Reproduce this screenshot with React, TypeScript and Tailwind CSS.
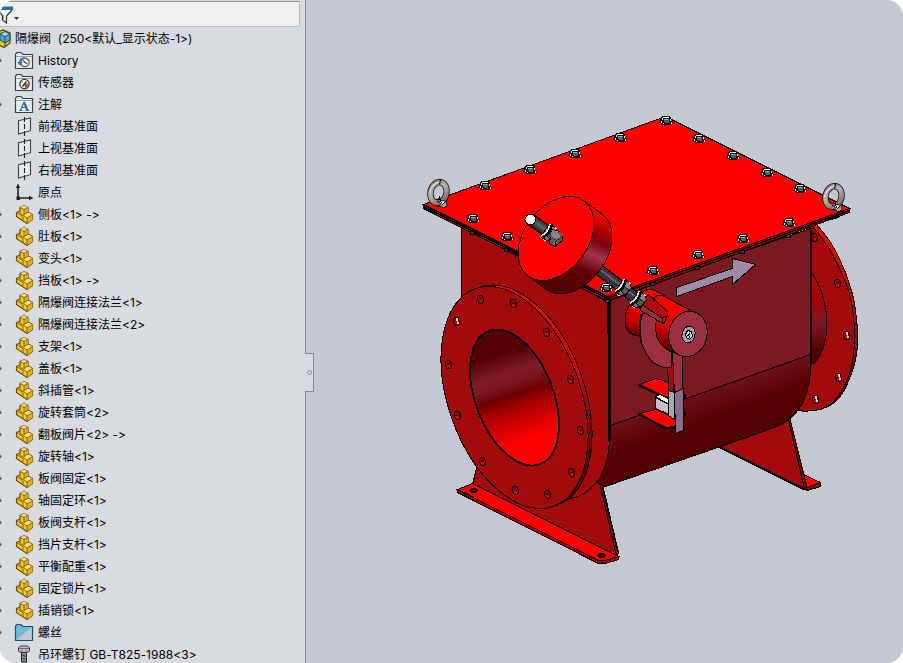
import { useState } from 'react';
import type { ReactNode } from 'react';

type IconKind =
  | 'history'
  | 'sensor'
  | 'note'
  | 'plane'
  | 'origin'
  | 'part'
  | 'folder'
  | 'screw';

type TreeItem = { label: string; icon: IconKind; expandable?: boolean };

const part = (label: string): TreeItem => ({ label, icon: 'part', expandable: true });

const items: TreeItem[] = [
  { label: 'History', icon: 'history', expandable: true },
  { label: '传感器', icon: 'sensor' },
  { label: '注解', icon: 'note', expandable: true },
  { label: '前视基准面', icon: 'plane' },
  { label: '上视基准面', icon: 'plane' },
  { label: '右视基准面', icon: 'plane' },
  { label: '原点', icon: 'origin' },
  part('侧板<1> ->'),
  part('肚板<1>'),
  part('变头<1>'),
  part('挡板<1> ->'),
  part('隔爆阀连接法兰<1>'),
  part('隔爆阀连接法兰<2>'),
  part('支架<1>'),
  part('盖板<1>'),
  part('斜插管<1>'),
  part('旋转套筒<2>'),
  part('翻板阀片<2> ->'),
  part('旋转轴<1>'),
  part('板阀固定<1>'),
  part('轴固定环<1>'),
  part('板阀支杆<1>'),
  part('挡片支杆<1>'),
  part('平衡配重<1>'),
  part('固定锁片<1>'),
  part('插销锁<1>'),
  { label: '螺丝', icon: 'folder', expandable: true },
  { label: '吊环螺钉 GB-T825-1988<3>', icon: 'screw', expandable: true },
];

const FolderFrame = ({ children }: { children: ReactNode }) => (
  <>
    <path d="M1.5 17.5V3L3 1.5H7L9 3.5H18.5V17.5Z" fill="#e9edf0" stroke="#3c3f42" strokeWidth="1.2" />
    <path d="M2 5.5H18" stroke="#9a9ea2" strokeWidth="1" />
    {children}
  </>
);

const icons: Record<IconKind, ReactNode> = {
  history: (
    <FolderFrame>
      <circle cx="11" cy="11.5" r="4.2" fill="#fff" stroke="#55595c" strokeWidth="1.2" />
      <path d="M9 9.5L11.5 12L13.5 12.5" fill="none" stroke="#333" strokeWidth="1.1" />
      <path d="M11 7.2C8 7 6 8.500 5.800 11" fill="none" stroke="#2f7ea3" strokeWidth="1.8" />
      <path d="M3 11H9L6 15Z" fill="#2f7ea3" />
    </FolderFrame>
  ),
  sensor: (
    <FolderFrame>
      <circle cx="10.500" cy="11" r="4.6" fill="#fff" stroke="#333" strokeWidth="1.3" />
      <path d="M10.500 11L14 10.500A4 4 0 0 1 11 15Z" fill="#e03a1c" />
      <path d="M8.500 13.500L12.500 8.500" stroke="#222" strokeWidth="1.4" />
      <path d="M7.500 9.500L8.500 8.500" stroke="#2f7ea3" strokeWidth="1.2" />
    </FolderFrame>
  ),
  note: (
    <FolderFrame>
      <path
        d="M5 15.500H8.500M11.500 15.500H15.500M6.500 15.500L10 7M8 12.500H12.500"
        fill="none"
        stroke="#2b7194"
        strokeWidth="1.2"
      />
      <path d="M10 7L13.500 15.500" stroke="#2b7194" strokeWidth="2.200" />
    </FolderFrame>
  ),
  plane: (
    <>
      <path d="M4.500 3.800L16.500 1V13.700L4.500 17Z" fill="#e6e9ec" stroke="#3c3f42" strokeWidth="1.1" />
      <path d="M10.500 0V19" stroke="#222" strokeWidth="1.1" strokeDasharray="5 2" />
    </>
  ),
  origin: (
    <>
      <path d="M4 3V15H16" fill="none" stroke="#222" strokeWidth="1.6" />
      <path d="M1.800 5L4 0.500L6.200 5ZM15 12.700L19.500 15L15 17.300Z" fill="#222" />
      <rect x="2.500" y="13.500" width="3.500" height="3.500" fill="#222" />
    </>
  ),
  part: (
    <>
      <path
        d="M6 2.500L10 0.700L14 2.500V7L18.500 9.500V14.500L13 18.500L2.500 11.500V7.500L6 6Z"
        fill="#f9cb1f"
        stroke="#6b4c08"
        strokeWidth="1.2"
        strokeLinejoin="round"
      />
      <path d="M6 2.500L10 0.700L14 2.500L10 4.500ZM9.500 10.500L14 7.500L18.500 9.500L13 13Z" fill="#fbe07a" />
      <path d="M10 4.500V9.500L14 7V2.500ZM13 13V18.500L18.500 14.500V9.500Z" fill="#e5ae1a" />
      <path
        d="M6 2.500L10 4.500L14 2.500M10 4.500V9.500L14 7M6 6V8.500L10 10.500M2.500 7.500L9 11.500V15M9.500 10.500L13 13L18.500 9.500M13 13V18.500"
        fill="none"
        stroke="#7a580c"
        strokeWidth="0.900"
      />
    </>
  ),
  folder: (
    <>
      <path d="M1.500 17.500V3L3 1.500H7L9 3.500H18.500V17.500Z" fill="#6fb9dc" />
      <path d="M18.500 3.500V17.500H1.500Z" fill="#c3c9cd" />
      <path d="M1.500 17.500V3L3 1.500H7L9 3.500H18.500V17.500Z" fill="none" stroke="#17506b" strokeWidth="1.2" />
    </>
  ),
  screw: (
    <>
      <path d="M7.500 7H12.500V17L10 19L7.500 17Z" fill="#8d8f91" stroke="#2e2e2e" strokeWidth="1" />
      <path d="M7.500 10L12.500 11.500M7.500 13L12.500 14.500M7.500 16L12.500 17" stroke="#333" strokeWidth="0.900" />
      <path d="M4.500 2.500L7 1H13L15.500 2.500V6L13 7.500H7L4.500 6Z" fill="#c6c9cb" stroke="#2e2e2e" strokeWidth="1" />
      <path d="M5 3.500H15M8 3.500V7M12 3.500V7" stroke="#555" strokeWidth="0.800" />
    </>
  ),
};

const TreeRow = ({ item }: { item: TreeItem }) => {
  const [open, setOpen] = useState(false);
  return (
    <li className="flex h-[22px] items-center">
      {item.expandable ? (
        <button
          type="button"
          aria-label={item.label}
          aria-expanded={open}
          onClick={() => setOpen(!open)}
          className="flex w-[14px] shrink-0"
        >
          <svg className="h-2 w-2" viewBox="0 0 8 8">
            <path d="M0 1.500L2 3.500L0 5.500Z" fill="#5d6064" />
          </svg>
        </button>
      ) : (
        <span className="w-[14px] shrink-0" />
      )}
      <svg className="h-5 w-5 shrink-0" viewBox="0 0 20 20">
        {icons[item.icon]}
      </svg>
      <span className="ml-1 whitespace-pre">{item.label}</span>
    </li>
  );
};

// bolt heads on the cover plate
const bolts = [
  [665, 120], [698, 138], [732, 155], [766, 172], [799, 188], [788, 222], [742, 238], [697, 254],
  [652, 270], [605, 287], [472, 218], [506, 236], [484, 185], [529, 169], [574, 153], [619, 137],
];

// bolt ends sticking out under the plate
const boltEnds = [
  [472, 232], [506, 249], [607, 300], [652, 283], [697, 267], [742, 251], [788, 235],
];

const frontHoles = [
  [480, 299], [513, 303], [546, 332], [570, 379], [580, 430], [571, 472],
  [547, 494], [515, 490], [482, 461], [457, 415], [448, 364], [456, 321],
];

const rearHoles = [
  [814, 237], [837, 283], [846, 335], [838, 377], [815, 399],
];

const Bolt = ({ x, y }: { x: number; y: number }) => (
  <g transform={`translate(${x} ${y})`} stroke="none">
    <path d="M-4 -4L-2 -5H3L5 -3L6 0L7 2L4 4L0 5L-4 4L-6 2L-5 -1Z" fill="#0b0b0b" />
    <path d="M-3 -4H3V-3H-3ZM-4 -3H-3V-1H-4ZM4 -2H5V0H4ZM-5 0H-4V2H-5ZM5 1H6V3H5ZM-3 2H-2V3H-3Z" fill="#f4f4f4" />
    <path d="M-2 -2H2L3 -1V2H-1L-2 1Z" fill="#5c5c5c" />
    <path d="M-2 -2H2V-1H-2Z" fill="#a8a8a8" />
  </g>
);

const Hole = ({ x, y, tail }: { x: number; y: number; tail?: boolean }) => (
  <g transform={`translate(${x} ${y}) rotate(-15)`}>
    <ellipse cx="0" cy="0" rx="3" ry="4.500" fill="#8e0608" />
    <path d="M-2 0.500Q0 -2 2 1.500Q2 4 0 4Q-2 3 -2 0.500Z" fill="#f00000" strokeWidth="0.700" />
    {tail && <path d="M1 -3V3" stroke="#d0d2da" strokeWidth="1.500" />}
  </g>
);

const EyeBolt = ({ x, y }: { x: number; y: number }) => (
  <g transform={`translate(${x} ${y})`}>
    <path d="M-3 8L1 6L8 7V13L4 15L-3 13Z" fill="#a9a4a2" strokeWidth="0.700" />
    <g transform="rotate(14)" shapeRendering="auto">
      <ellipse cx="0" cy="0" rx="8" ry="10.500" fill="none" stroke="#161414" strokeWidth="6.500" />
      <ellipse cx="0" cy="0" rx="8" ry="10.500" fill="none" stroke="url(#steel)" strokeWidth="4.800" />
      <path d="M-8.500 3Q-9 -6 -2 -10.500" fill="none" stroke="#e9e4e2" strokeWidth="1.400" />
      <path d="M-1 -13.500V-8" />
    </g>
    <path d="M-2 9L3 8L6 9L3 12Z" fill="#e2dedc" strokeWidth="0.700" />
    <path d="M1 4L3 11" />
  </g>
);

const RodNut = ({ x, y }: { x: number; y: number }) => (
  <g transform={`translate(${x} ${y}) rotate(37)`}>
    <path d="M-4 -7L3 -8L7 -5V5L3 8L-4 7Z" fill="#5d555c" />
    <path d="M-1 -7L3 -8L7 -5V-2H-1Z" fill="#8d7f88" strokeWidth="0.700" />
    <path d="M-1 4H6L3 8L-1 7Z" fill="#7b7078" strokeWidth="0.700" />
    <path d="M-3 -8Q2 0 -3 8" fill="none" strokeWidth="4" />
    <path d="M-4 -8Q0 0 -4 8" fill="none" stroke="#f1ede4" strokeWidth="1.600" />
    <path d="M2 -8L5 -8M3 8L0 9" stroke="#f1ede4" strokeWidth="1.200" />
  </g>
);

const ValveModel = () => (
  <svg
    className="h-full w-full"
    viewBox="305.5 -0.5 597 663"
    role="img"
    aria-label="隔爆阀"
    shapeRendering="crispEdges"
    stroke="#000"
    strokeWidth="1"
  >
    <defs>
      {/* runs in page space, so undo the rotation of the ellipse that it fills */}
      <linearGradient
        id="bore"
        gradientUnits="userSpaceOnUse"
        x1="492"
        y1="333"
        x2="534"
        y2="456"
        gradientTransform="rotate(-68.9 514 397)"
      >
        <stop offset="0.160" stopColor="#520000" />
        <stop offset="0.330" stopColor="#801c27" />
        <stop offset="0.400" stopColor="#7a1820" />
        <stop offset="0.500" stopColor="#6e0004" />
        <stop offset="0.600" stopColor="#a80000" />
        <stop offset="0.860" stopColor="#ff0000" />
      </linearGradient>
      <linearGradient id="belly" gradientUnits="userSpaceOnUse" x1="700" y1="390" x2="726" y2="462">
        <stop offset="0" stopColor="#70131a" />
        <stop offset="0.400" stopColor="#560000" />
        <stop offset="1" stopColor="#500000" />
      </linearGradient>
      <linearGradient id="rearTube" x1="0" y1="0" x2="0" y2="1">
        <stop offset="0" stopColor="#d80000" />
        <stop offset="0.280" stopColor="#a80000" />
        <stop offset="0.550" stopColor="#7c1a24" />
        <stop offset="0.850" stopColor="#520000" />
      </linearGradient>
      <linearGradient id="rearRim" gradientUnits="userSpaceOnUse" x1="820" y1="230" x2="850" y2="400">
        <stop offset="0" stopColor="#f40000" />
        <stop offset="0.450" stopColor="#c40000" />
        <stop offset="0.700" stopColor="#74151c" />
        <stop offset="1" stopColor="#520000" />
      </linearGradient>
      <linearGradient
        id="frontRim"
        gradientUnits="userSpaceOnUse"
        x1="530"
        y1="290"
        x2="585"
        y2="480"
        gradientTransform="rotate(-70.2 518 395.5)"
      >
        <stop offset="0" stopColor="#ff0000" />
        <stop offset="0.450" stopColor="#e00000" />
        <stop offset="0.700" stopColor="#7c0a10" />
        <stop offset="1" stopColor="#5a0000" />
      </linearGradient>
      <linearGradient id="weight" gradientUnits="userSpaceOnUse" x1="598" y1="206" x2="560" y2="296">
        <stop offset="0.050" stopColor="#fa0000" />
        <stop offset="0.240" stopColor="#a00000" />
        <stop offset="0.340" stopColor="#7a0410" />
        <stop offset="0.480" stopColor="#a43447" />
        <stop offset="0.660" stopColor="#640008" />
        <stop offset="0.900" stopColor="#520000" />
      </linearGradient>
      <linearGradient id="hub" gradientUnits="userSpaceOnUse" x1="676" y1="302" x2="660" y2="346">
        <stop offset="0.250" stopColor="#ff0000" />
        <stop offset="0.700" stopColor="#c00000" />
        <stop offset="1" stopColor="#5a0000" />
      </linearGradient>
      <linearGradient id="rod" gradientUnits="userSpaceOnUse" x1="543" y1="221" x2="537" y2="230">
        <stop offset="0" stopColor="#2c2a30" />
        <stop offset="0.500" stopColor="#65606a" />
        <stop offset="1" stopColor="#242226" />
      </linearGradient>
      <linearGradient id="steel" x1="0" y1="0" x2="1" y2="1">
        <stop offset="0" stopColor="#7d7775" />
        <stop offset="0.400" stopColor="#b9b3b0" />
        <stop offset="1" stopColor="#6a6462" />
      </linearGradient>
    </defs>

    {/* rear flange */}
    <path
      d="M806 222L815 223Q827 236 833 247Q845 269 850 287Q855 301 857 330Q858 355 852 370Q844 394 834 402Q820 413 796 410Z"
      fill="url(#rearRim)"
    />
    <path
      d="M806 222L811 225Q826 242 832 254Q845 279 849 293Q854 312 854 335Q854 358 849 373Q842 393 832 402Q820 413 796 410Z"
      fill="#a30a0c"
    />
    <path d="M808 268Q820 283 824 302Q829 325 824 343Q820 360 808 366Z" fill="url(#rearTube)" />
    {rearHoles.map(([x, y]) => (
      <Hole key={y} x={x} y={y} tail={y > 300} />
    ))}

    {/* rear foot */}
    <path d="M803 474L820 482V486L807 490L803 488Z" fill="#ff0000" />
    <path d="M807 490V487L820 482V486Z" fill="#8a0608" />
    <path d="M718 446L774 425L787 415L806 489L803 488Z" fill="#a30a0c" />
    <path d="M720 447L804 489" strokeWidth="2" />
    <path d="M787 415L789 416L807 489H804Z" fill="#7a0608" />

    {/* front foot */}
    <path d="M477 464L472 484L616 556L618 552L603 488L599 480L560 490Z" fill="#a30a0c" />
    <path d="M599 482L601 482L605 500L618 553L616 556Z" fill="#7a0608" />
    <path d="M457 489L472 483L618 556V559L605 563H598L457 492Z" fill="#9a0608" />
    <path d="M457 489L472 483L618 556L604 560H598Z" fill="#ff0000" />
    <ellipse cx="473" cy="490" rx="3.500" ry="1.500" fill="#700" strokeWidth="1.500" />
    <ellipse cx="601" cy="555" rx="3.500" ry="1.500" fill="#700" strokeWidth="1.500" />

    {/* housing */}
    <path
      d="M610 424L810 354V365Q810 384 804 398Q796 418 774 427L720 446L602 487L596 480L609 440Z"
      fill="url(#belly)"
    />
    <path d="M610 297L810 228V354L610 425Z" fill="#7c1a21" />
    <path
      d="M461 222L607 297L609 440Q608 462 600 476Q588 496 566 499L540 500L461 400Z"
      fill="#a30a0c"
    />
    <path d="M609 300V440" strokeWidth="3" />
    <path d="M810 230V365" strokeWidth="2" />

    {/* front flange */}
    <ellipse cx="518" cy="395.500" rx="115.600" ry="66.100" transform="rotate(70.200 518 395.500)" fill="url(#frontRim)" />
    <ellipse cx="514" cy="397" rx="115.600" ry="66.100" transform="rotate(70.200 514 397)" fill="#a30a0c" />
    <ellipse
      cx="514"
      cy="397"
      rx="71.300"
      ry="38.900"
      transform="rotate(68.900 514 397)"
      fill="url(#bore)"
      strokeWidth="1.800"
    />
    {frontHoles.map(([x, y]) => (
      <Hole key={`${x}-${y}`} x={x} y={y} tail={x === 456} />
    ))}

    {/* flow direction arrow */}
    <path d="M676 287L732 268V258L755 264L732 284V276L676 296Z" fill="#a08aa8" />

    {/* cover plate */}
    <path d="M423 204L607 296L849 208V212L607 301L423 208Z" fill="#7a0608" />
    <path d="M423 206L607 298L849 210" fill="none" />
    <path d="M423 204L665 116L849 208L607 296Z" fill="#ff0000" />
    <path d="M826 218L838 214V217L830 219Z" fill="#111" />
    {boltEnds.map(([x, y]) => (
      <rect key={x} x={x - 2} y={y - 1} width="4" height="3" fill="#3c3c3c" />
    ))}
    {bolts.map(([x, y]) => (
      <Bolt key={`${x}-${y}`} x={x} y={y} />
    ))}
    <EyeBolt x={438} y={192} />
    <EyeBolt x={833} y={196} />

    {/* shelves and latch block */}
    <path d="M639 384L655 378L672 383V398L664 396Z" fill="#ff0000" />
    <path d="M639 385L664 397L670 398" fill="none" strokeWidth="2" />
    <path d="M655 396L660 394L670 399V405Z" fill="#fff" />
    <path d="M655 397L669 404V414L655 408Z" fill="#c2c2c2" />
    <path d="M639 413L655 409L676 418V426L664 427Z" fill="#ff0000" />
    <path d="M639 414L664 427L674 427" fill="none" strokeWidth="2" />

    {/* lever */}
    <path d="M667 358L673 350V393L668 390Z" fill="#a30a0c" />
    <path d="M672 352L682 354V388L674 393Z" fill="#9c2f40" />
    <path d="M668 390L674 392V419L668 415Z" fill="#a9a9a9" />
    <path d="M674 392L683 388V430L675 433Z" fill="#857087" />
    <path d="M684 393V397M684 411V415" strokeWidth="3" />

    {/* hub with the fork */}
    <path d="M647 289Q655 288 666 297L650 320L641 336Q628 335 625 326V314Q630 296 647 289Z" fill="url(#hub)" />
    <path
      d="M642 313Q638 326 641 342Q645 355 653 362Q661 368 671 367L671 352Q658 345 655 330L657 312Z"
      fill="#9c2f40"
    />
    <path d="M641 314Q638 328 641 342" fill="none" strokeWidth="2" strokeDasharray="4 1" />
    <path
      d="M654 297Q658 293 664 296L692 311L674 352Q662 349 657 338Q654 330 656 318Z"
      fill="url(#hub)"
    />
    <ellipse cx="687.500" cy="333.500" rx="19" ry="23" transform="rotate(14 687.500 333.500)" fill="#9c2f40" />
    <ellipse cx="688" cy="334" rx="6.500" ry="8.500" transform="rotate(14 688 334)" fill="#a597ad" />
    <path d="M685 334L687 330L691 331L692 336L689 339L686 337Z" fill="#d6d6d6" />
    <path d="M687 335L690 333M689 337V335" strokeWidth="1.500" />
    <path d="M645 297L666 312L667 316L663 323L640 310L638 303Z" fill="#9c2f40" />
    <path d="M645 297L648 294L667 311L667 315L662 318L643 305Z" fill="#b10a10" />
    <path d="M662 318V323" />

    {/* rod, right half */}
    <path d="M602 265L646 299L640 308L596 274Z" fill="#37343b" />
    <path d="M601 270L642 302" stroke="#67616d" strokeWidth="2" />
    <RodNut x={622} y={287} />
    <RodNut x={637} y={299} />

    {/* counterweight */}
    <path
      d="M583.600 200.500L602.600 214.500A46.900 31.800 -52.800 0 1 546.400 289.500L527.400 275.500Z"
      fill="url(#weight)"
    />
    <ellipse cx="555.500" cy="238" rx="46.900" ry="31.800" transform="rotate(-52.800 555.500 238)" fill="#ff0000" />

    {/* rod, left half */}
    <path d="M533 214L552 228L546 237L526 223Z" fill="url(#rod)" />
    <ellipse cx="530" cy="219" rx="5.500" ry="5" fill="#fff" />
    <RodNut x={548} y={232} />
    <path d="M551 229L558 231L562 235V240L554 246L549 243Z" fill="#625961" />
    <path d="M551 229L558 231L562 235L555 240L549 236Z" fill="#8d7f88" strokeWidth="0.700" />
    <path d="M555 240V246" />
  </svg>
);

export default function App() {
  const [filter, setFilter] = useState('');
  const shown = items.filter((item) => item.label.includes(filter));

  return (
    <div className="flex h-screen overflow-hidden rounded-2xl bg-[#c4c8d3] font-['Inter','Noto_Sans_CJK_SC',sans-serif] text-xs text-black [font-variant-ligatures:none]">
      <aside className="w-[306px] shrink-0 overflow-hidden border-r border-[#85858f] bg-[#d8dbe0]">
        <div className="flex h-7 pt-px pr-[5px] pb-px">
          <div className="flex w-full items-center border-y border-r border-[#bcbcbc] border-t-[#8f8f8f] bg-[#efefef]">
            <button type="button" aria-label="过滤器" className="flex shrink-0">
              <svg className="h-5 w-5" viewBox="0 0 20 20">
                <path d="M-3 3.500H12V6L6.500 12V19L2.500 16V12Z" fill="#f7f7f7" stroke="#333" strokeWidth="1.200" />
                <path d="M-3 2.500H13V6H-3Z" fill="#1e7496" />
                <path d="M3.500 11V16.500" stroke="#999" />
                <path d="M14 13H19L16.500 16Z" fill="#333" />
              </svg>
            </button>
            <input
              type="text"
              aria-label="过滤"
              value={filter}
              onChange={(e) => setFilter(e.target.value)}
              className="h-5 w-full bg-transparent px-1 outline-none"
            />
          </div>
        </div>

        <div className="flex h-[22px] items-center">
          <svg className="h-5 w-[15px] shrink-0" viewBox="0 0 15 20">
            <path d="M-5 4L3 1L10 4V14L4 18.500L-5 14Z" fill="#f2c928" stroke="#5a4208" strokeWidth="1.200" />
            <path d="M0 5L5 2.500L10 5V11L5 14L0 11Z" fill="#5ba6c8" stroke="#184a60" strokeWidth="1" />
            <path d="M0 5L5 7.500L10 5L5 2.500Z" fill="#a9d9ec" stroke="#184a60" strokeWidth="0.900" />
            <path d="M5 7.500V18" stroke="#184a60" strokeWidth="1" />
          </svg>
          <span className="whitespace-pre">{'隔爆阀  (250<默认_显示状态-1>)'}</span>
        </div>
        <ul>
          {shown.map((item) => (
            <TreeRow key={item.label} item={item} />
          ))}
        </ul>
      </aside>

      <main className="relative min-w-0 flex-1">
        <ValveModel />
        <button
          type="button"
          aria-label="折叠"
          className="absolute top-[353px] -left-px flex h-[39px] w-[9px] items-center justify-center border border-l-0 border-[#85858f] bg-[#d8dbe0]"
        >
          <span className="h-[5px] w-[5px] rounded-full border border-[#85858f]" />
        </button>
      </main>
    </div>
  );
}
